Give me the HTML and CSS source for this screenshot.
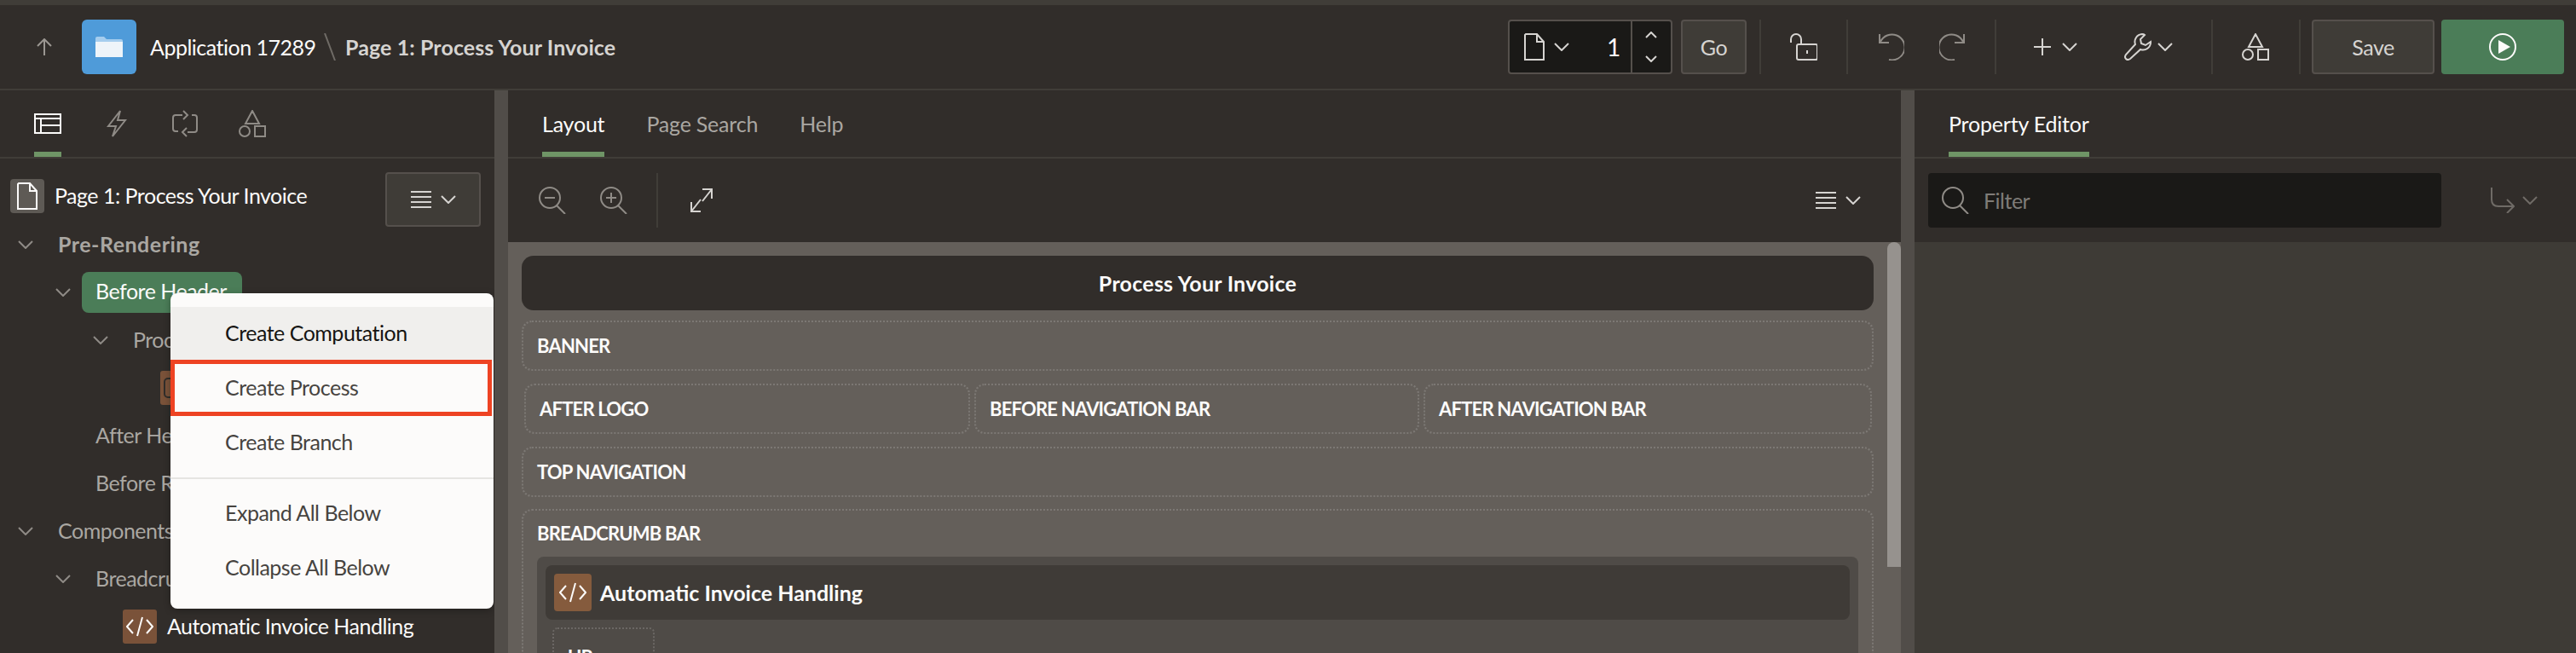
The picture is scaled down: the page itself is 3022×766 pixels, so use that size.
FILE: index.html
```html
<!DOCTYPE html>
<html>
<head>
    <title>Page Designer</title>
    <link rel="stylesheet" href="styles.css">
</head>
<body>
    <div class="top-strip"></div>

    <!-- Header toolbar -->
    <header class="toolbar">
        <svg class="ico up-arrow" width="18" height="20" viewBox="0 0 18 20"><path d="M9 20V1M1 9l8-8 8 8"/></svg>
        <div class="app-tile">
            <svg width="32" height="24" viewBox="0 0 32 24"><path d="M0 2q0-2 2-2h8l3 3h17q2 0 2 2v2H0z" fill="#a5cdee"/><path d="M0 6h32v18H0z" fill="#eef4f9"/></svg>
        </div>
        <span class="app-name">Application 17289</span>
        <svg class="crumb-sep" width="14" height="32" viewBox="0 0 14 32"><path d="M1 0l12 32"/></svg>
        <span class="page-name">Page 1: Process Your Invoice</span>

        <div class="page-box">
            <svg class="ico doc" width="24" height="32" viewBox="0 0 24 32"><path d="M2 1h13l8 9v21H1V2zM15 1v9h8"/></svg>
            <svg class="ico chev" width="18" height="10" viewBox="0 0 18 10"><path d="M1 1l8 8 8-8"/></svg>
            <span class="page-num">1</span>
            <div class="spin">
                <svg class="ico" width="14" height="8" viewBox="0 0 14 8"><path d="M1 7l6-6 6 6"/></svg>
                <svg class="ico" width="14" height="8" viewBox="0 0 14 8"><path d="M1 1l6 6 6-6"/></svg>
            </div>
        </div>
        <button class="btn go">Go</button>
        <i class="vsep sep-a"></i>
        <svg class="ico lock" width="32" height="32" viewBox="0 0 32 32"><path d="M1 11V7a6 6 0 0 1 12 0v6M10 13h20q2 0 2 2v14q0 2-2 2H10q-2 0-2-2V15q0-2 2-2zM20 20v4"/></svg>
        <i class="vsep sep-b"></i>
        <svg class="ico dim undo" width="30" height="32" viewBox="0 0 30 32"><path d="M1 1v10h11M2 10a15 15 0 1 1 10 21"/></svg>
        <svg class="ico dim redo" width="30" height="32" viewBox="0 0 30 32"><path d="M29 1v10H18M28 10a15 15 0 1 0-10 21"/></svg>
        <i class="vsep sep-c"></i>
        <svg class="ico plus" width="20" height="20" viewBox="0 0 20 20"><path d="M10 0v20M0 10h20"/></svg>
        <svg class="ico chev plus-chev" width="18" height="10" viewBox="0 0 18 10"><path d="M1 1l8 8 8-8"/></svg>
        <svg class="ico wrench" width="32" height="32" viewBox="0 0 32 32"><path d="M21 1a9 9 0 0 0-8 12L2 25q-2 3 0 5t5 0l12-11a9 9 0 0 0 12-9l-6 4-5-2-1-5 5-5q-1-1-3-1z"/></svg>
        <svg class="ico chev wrench-chev" width="18" height="10" viewBox="0 0 18 10"><path d="M1 1l8 8 8-8"/></svg>
        <i class="vsep sep-d"></i>
        <svg class="ico shapes-top" width="32" height="32" viewBox="0 0 32 32"><path d="M16 1l8 15H8zM1 25a6 6 0 1 0 12 0a6 6 0 1 0-12 0M19 19h12v12H19z"/></svg>
        <i class="vsep sep-e"></i>
        <button class="btn save">Save</button>
        <button class="run">
            <svg width="32" height="32" viewBox="0 0 32 32"><circle cx="16" cy="16" r="15" fill="none" stroke="#fcfbfa" stroke-width="2"/><path d="M11 8l14 8-14 8z" fill="#fcfbfa"/></svg>
        </button>
    </header>

    <div class="workspace">
        <!-- Left pane: rendering tree -->
        <aside class="side">
            <div class="tabs side-tabs">
                <div class="tab active">
                    <svg class="ico bright" width="32" height="24" viewBox="0 0 32 24"><path d="M1 1h30v22H1zM1 6h30M8 6v17M8 14h23"/></svg>
                </div>
                <div class="tab">
                    <svg class="ico dim" width="24" height="32" viewBox="0 0 24 32"><path d="M16 1L2 19h9l-4 12 15-19h-9z"/></svg>
                </div>
                <div class="tab">
                    <svg class="ico dim" width="32" height="32" viewBox="0 0 32 32"><path d="M13 6H5q-3 0-3 3v13q0 3 3 3h3M19 26h8q3 0 3-3V9q0-3-3-3h-3M14 1l5 5-5 5M18 21l-5 5 5 5"/></svg>
                </div>
                <div class="tab">
                    <svg class="ico dim" width="32" height="32" viewBox="0 0 32 32"><path d="M16 1l8 15H8zM1 25a6 6 0 1 0 12 0a6 6 0 1 0-12 0M19 19h12v12H19z"/></svg>
                </div>
            </div>
            <div class="tree-head">
                <div class="doc-tile">
                    <svg class="ico bright" width="24" height="32" viewBox="0 0 24 32"><path d="M2 1h13l8 9v21H1V2zM15 1v9h8"/></svg>
                </div>
                <span class="tree-title">Page 1: Process Your Invoice</span>
                <button class="btn menu-btn">
                    <svg class="ico" width="24" height="20" viewBox="0 0 24 20"><path d="M0 1h24M0 7h24M0 13h24M0 19h24"/></svg>
                    <svg class="ico chev" width="18" height="10" viewBox="0 0 18 10"><path d="M1 1l8 8 8-8"/></svg>
                </button>
            </div>
            <div class="tree">
                <div class="row lvl-1"><svg class="ico twist" width="18" height="10" viewBox="0 0 18 10"><path d="M1 1l8 8 8-8"/></svg><span class="strong">Pre-Rendering</span></div>
                <div class="row lvl-2"><svg class="ico twist" width="18" height="10" viewBox="0 0 18 10"><path d="M1 1l8 8 8-8"/></svg><span class="pill">Before Header</span></div>
                <div class="row lvl-3"><svg class="ico twist" width="18" height="10" viewBox="0 0 18 10"><path d="M1 1l8 8 8-8"/></svg><span>Processes</span></div>
                <div class="row lvl-4">
                    <div class="tile">
                        <svg width="40" height="40" viewBox="0 0 40 40"><rect x="5" y="9" width="30" height="22" rx="4" fill="none" stroke="#312d2a" stroke-width="2"/></svg>
                    </div>
                </div>
                <div class="row lvl-2b"><span>After Header</span></div>
                <div class="row lvl-2b"><span>Before Regions</span></div>
                <div class="row lvl-1"><svg class="ico twist" width="18" height="10" viewBox="0 0 18 10"><path d="M1 1l8 8 8-8"/></svg><span>Components</span></div>
                <div class="row lvl-2"><svg class="ico twist" width="18" height="10" viewBox="0 0 18 10"><path d="M1 1l8 8 8-8"/></svg><span class="plain">Breadcrumb Bar</span></div>
                <div class="row lvl-5">
                    <div class="tile">
                        <svg class="code" width="32" height="24" viewBox="0 0 32 24"><path d="M8 4L1 12l7 8M24 4l7 8-7 8M19 1l-6 22"/></svg>
                    </div>
                    <span class="bright-text">Automatic Invoice Handling</span>
                </div>
            </div>

            <!-- Context menu -->
            <div class="ctx-menu">
                <div class="ctx-item hover">Create Computation</div>
                <div class="ctx-item">Create Process</div>
                <div class="ctx-item">Create Branch</div>
                <div class="ctx-line"></div>
                <div class="ctx-item">Expand All Below</div>
                <div class="ctx-item">Collapse All Below</div>
                <div class="callout"></div>
            </div>
        </aside>

        <div class="splitter"></div>

        <!-- Center pane: layout -->
        <main class="center">
            <div class="tabs center-tabs">
                <div class="tab active">Layout</div>
                <div class="tab">Page Search</div>
                <div class="tab">Help</div>
            </div>
            <div class="layout-bar">
                <svg class="ico dim" width="32" height="32" viewBox="0 0 32 32"><path d="M1 13a12 12 0 1 0 24 0a12 12 0 1 0-24 0M21 22l10 10M7 13h12"/></svg>
                <svg class="ico dim zoom-in" width="32" height="32" viewBox="0 0 32 32"><path d="M1 13a12 12 0 1 0 24 0a12 12 0 1 0-24 0M21 22l10 10M7 13h12M13 7v12"/></svg>
                <i class="bar-sep"></i>
                <svg class="ico expand" width="26" height="28" viewBox="0 0 26 28"><path d="M14 1h11v11M25 1L14 15M1 16v11h11M1 27l11-14"/></svg>
                <div class="bar-menu">
                    <svg class="ico" width="24" height="20" viewBox="0 0 24 20"><path d="M0 1h24M0 7h24M0 13h24M0 19h24"/></svg>
                    <svg class="ico chev" width="18" height="10" viewBox="0 0 18 10"><path d="M1 1l8 8 8-8"/></svg>
                </div>
            </div>
            <div class="canvas">
                <div class="canvas-inner">
                    <div class="page-title">Process Your Invoice</div>
                    <div class="region">BANNER</div>
                    <div class="region-row">
                        <div class="region">AFTER LOGO</div>
                        <div class="region">BEFORE NAVIGATION BAR</div>
                        <div class="region">AFTER NAVIGATION BAR</div>
                    </div>
                    <div class="region">TOP NAVIGATION</div>
                    <div class="region tall">
                        <div class="region-label">BREADCRUMB BAR</div>
                        <div class="crumb-wrap">
                            <div class="crumb-head">
                                <div class="tile big">
                                    <svg class="code" width="32" height="24" viewBox="0 0 32 24"><path d="M8 4L1 12l7 8M24 4l7 8-7 8M19 1l-6 22"/></svg>
                                </div>
                                <span>Automatic Invoice Handling</span>
                            </div>
                            <div class="slot">UP</div>
                        </div>
                    </div>
                </div>
                <div class="scroll"><div class="thumb"></div></div>
            </div>
        </main>

        <div class="splitter"></div>

        <!-- Right pane: property editor -->
        <section class="props">
            <div class="tabs props-tabs">
                <div class="tab active">Property Editor</div>
            </div>
            <div class="props-bar">
                <div class="filter">
                    <svg class="ico dim" width="32" height="32" viewBox="0 0 32 32"><path d="M1 13a12 12 0 1 0 24 0a12 12 0 1 0-24 0M21 22l10 10"/></svg>
                    <span>Filter</span>
                </div>
                <svg class="ico faint go-to" width="28" height="30" viewBox="0 0 28 30"><path d="M1 0v14q0 8 8 8h18M19 14l8 8-8 8"/></svg>
                <svg class="ico faint chev" width="18" height="10" viewBox="0 0 18 10"><path d="M1 1l8 8 8-8"/></svg>
            </div>
            <div class="props-body"></div>
        </section>
    </div>
</body>
</html>
```

FILE: styles.css
```css
* {
    box-sizing: border-box;
}
html, body {
    margin: 0;
    height: 766px;
    overflow: hidden;
}
body {
    background: #312d2a;
    color: #d6d4d1;
    font-family: "Lato", "Noto Sans", sans-serif;
    font-size: 25px;
    letter-spacing: -0.5px;
    display: flex;
    flex-direction: column;
}
button {
    font: inherit;
    letter-spacing: inherit;
    cursor: pointer;
}
.ico {
    fill: none;
    stroke: #d6d4d1;
    stroke-width: 2;
    flex: none;
    display: block;
}
.ico.dim {
    stroke: #8f8b86;
}
.ico.faint {
    stroke: #6f6b66;
}
.ico.bright {
    stroke: #fcfbfa;
}

.top-strip {
    height: 6px;
    background: #403d38;
}

/* Header */
.toolbar {
    height: 100px;
    flex: none;
    border-bottom: 2px solid #403d38;
    display: flex;
    align-items: center;
    padding-left: 43px;
}
.up-arrow {
    stroke: #9b9792;
}
.app-tile {
    width: 64px;
    height: 64px;
    margin-left: 35px;
    background: #4f9bd9;
    border-radius: 6px;
    display: flex;
    align-items: center;
    justify-content: center;
}
.app-name {
    margin-left: 16px;
    color: #fcfbfa;
    width: 190px;
    white-space: nowrap;
}
.crumb-sep {
    margin-left: 14px;
    fill: none;
    stroke: #6f6b66;
    stroke-width: 2;
}
.page-name {
    margin-left: 11px;
    font-weight: 700;
    letter-spacing: 0.1px;
    color: #d6d4d1;
    width: 317px;
    white-space: nowrap;
}
.page-box {
    margin-left: 1047px;
    width: 193px;
    height: 64px;
    background: #1a1917;
    border: 2px solid #55504c;
    border-radius: 4px;
    display: flex;
    align-items: center;
    padding-left: 17px;
}
.page-box .chev {
    margin-left: 11px;
}
.page-num {
    margin-left: 44px;
    color: #fcfbfa;
    width: 28px;
    font-size: 28px;
}
.spin {
    height: 100%;
    width: 48px;
    border-left: 2px solid #55504c;
    display: flex;
    flex-direction: column;
    align-items: center;
    justify-content: center;
    gap: 20px;
}
.btn {
    height: 64px;
    background: #3f3c37;
    border: 2px solid #55504c;
    border-radius: 4px;
    color: #d6d4d1;
}
.go {
    width: 77px;
    margin-left: 10px;
}
.vsep {
    width: 2px;
    height: 64px;
    background: #403d38;
    flex: none;
}
.sep-a {
    margin-left: 15px;
}
.lock {
    margin-left: 34px;
}
.sep-b {
    margin-left: 34px;
}
.undo {
    margin-left: 36px;
}
.redo {
    margin-left: 41px;
}
.sep-c {
    margin-left: 35px;
}
.plus {
    margin-left: 44px;
}
.plus-chev {
    margin-left: 13px;
}
.wrench {
    margin-left: 55px;
}
.wrench-chev {
    margin-left: 7px;
}
.sep-d {
    margin-left: 45px;
}
.shapes-top {
    margin-left: 34px;
}
.sep-e {
    margin-left: 35px;
}
.save {
    width: 144px;
    margin-left: 13px;
}
.run {
    width: 144px;
    height: 64px;
    margin-left: 8px;
    background: #4b7d58;
    border: 0;
    border-radius: 4px;
    display: flex;
    align-items: center;
    justify-content: center;
}

/* Panes */
.workspace {
    flex: 1;
    display: flex;
    min-height: 0;
}
.side {
    width: 580px;
    flex: none;
    position: relative;
    overflow: hidden;
}
.splitter {
    width: 16px;
    flex: none;
    background: #514d49;
}
.center {
    width: 1634px;
    flex: none;
    display: flex;
    flex-direction: column;
}
.props {
    flex: 1;
    display: flex;
    flex-direction: column;
}

/* Tabs */
.tabs {
    height: 80px;
    flex: none;
    border-bottom: 2px solid #403d38;
    display: flex;
    letter-spacing: -0.2px;
}
.tab {
    height: 78px;
    display: flex;
    align-items: center;
    color: #aaa7a2;
    border-bottom: 6px solid transparent;
    padding-top: 6px;
}
.tab.active {
    color: #fcfbfa;
    border-bottom-color: #6f9566;
}
.side-tabs {
    padding-left: 40px;
}
.side-tabs .tab:nth-child(2) {
    margin-left: 53px;
}
.side-tabs .tab:nth-child(3) {
    margin-left: 52px;
}
.side-tabs .tab:nth-child(4) {
    margin-left: 47px;
}
.center-tabs {
    padding-left: 40px;
    gap: 49px;
}
.props-tabs {
    padding-left: 40px;
}

/* Tree */
.tree-head {
    height: 73px;
    flex: none;
    display: flex;
    align-items: flex-start;
    padding: 16px 0 0 12px;
}
.doc-tile {
    width: 40px;
    height: 40px;
    margin-top: 8px;
    background: #5e5a55;
    border-radius: 4px;
    display: flex;
    align-items: center;
    justify-content: center;
}
.tree-title {
    margin: 7px 0 0 12px;
    width: 388px;
    line-height: 40px;
    color: #fcfbfa;
}
.menu-btn {
    width: 112px;
    display: flex;
    align-items: center;
    justify-content: center;
    gap: 11px;
    position: relative;
    z-index: 1;
}
.row {
    height: 56px;
    display: flex;
    align-items: center;
    color: #aaa7a2;
    white-space: nowrap;
}
.row > span {
    margin-bottom: 3px;
}
.twist {
    stroke: #8f8b86;
}
.lvl-1 {
    padding-left: 21px;
}
.lvl-1 span {
    margin-left: 29px;
}
.lvl-2 {
    padding-left: 65px;
}
.lvl-2 span {
    margin-left: 29px;
}
.lvl-2 .pill {
    margin: 0 0 0 13px;
}
.lvl-3 {
    padding-left: 109px;
}
.lvl-3 span {
    margin-left: 29px;
}
.lvl-4 {
    padding-left: 188px;
}
.lvl-2b {
    padding-left: 112px;
}
.lvl-5 {
    padding-left: 144px;
}
.lvl-5 span {
    margin-left: 12px;
}
.strong {
    font-weight: 700;
    letter-spacing: 0.5px;
}
.bright-text {
    color: #fcfbfa;
}
.pill {
    height: 48px;
    width: 188px;
    padding-left: 16px;
    line-height: 44px;
    background: #4b7d58;
    border-radius: 8px;
    color: #fcfbfa;
}
.tile {
    width: 40px;
    height: 40px;
    background: #7a5239;
    border-radius: 3px;
    display: flex;
    align-items: center;
    justify-content: center;
    flex: none;
}
.tile.big {
    width: 44px;
    height: 44px;
    background: #855b3d;
    border-radius: 4px;
}
.code {
    fill: none;
    stroke: #fcfbfa;
    stroke-width: 2;
}

/* Context menu */
.ctx-menu {
    position: absolute;
    top: 238px;
    left: 200px;
    width: 379px;
    height: 370px;
    padding: 16px 0;
    background: #fcfbfa;
    border-radius: 8px;
    box-shadow: 0 2px 8px rgba(0, 0, 0, 0.3);
    color: #46433f;
    z-index: 2;
}
.ctx-item {
    height: 64px;
    line-height: 61px;
    padding-left: 64px;
}
.ctx-item.hover {
    background: #f0efed;
    color: #161513;
}
.ctx-line {
    height: 2px;
    background: #e5e4e2;
    margin: 8px 0 9px;
}
.callout {
    position: absolute;
    top: 78px;
    left: 0;
    width: 377px;
    height: 66px;
    border: 5px solid #ee4323;
}

/* Layout bar */
.layout-bar {
    height: 98px;
    flex: none;
    display: flex;
    align-items: center;
    padding: 0 47px 0 36px;
}
.zoom-in {
    margin-left: 40px;
}
.bar-sep {
    width: 2px;
    height: 64px;
    background: #403d38;
    margin-left: 34px;
}
.expand {
    margin-left: 38px;
}
.bar-menu {
    margin-left: auto;
    display: flex;
    align-items: center;
    gap: 11px;
}

/* Canvas */
.canvas {
    flex: 1;
    min-height: 0;
    display: flex;
    background: #645f5a;
    overflow: hidden;
}
.canvas-inner {
    flex: 1;
    padding: 16px 16px 0;
    display: flex;
    flex-direction: column;
    gap: 15px;
    min-width: 0;
}
.page-title {
    height: 64px;
    margin-bottom: -3px;
    flex: none;
    background: #312d2a;
    border-radius: 14px;
    color: #fcfbfa;
    font-weight: 700;
    letter-spacing: 0.25px;
    display: flex;
    align-items: center;
    justify-content: center;
}
.region {
    height: 59px;
    flex: none;
    border: 2px dotted rgba(255, 255, 255, 0.16);
    border-radius: 12px;
    padding-left: 16px;
    display: flex;
    align-items: center;
    color: #fcfbfa;
    font-size: 22px;
    font-weight: 700;
    letter-spacing: -0.8px;
}
.region-row {
    display: grid;
    grid-template-columns: 523px 522px 1fr;
    gap: 5px;
    padding: 0 2px 0 3px;
    flex: none;
}
.region.tall {
    height: 300px;
    margin-top: -1px;
    display: block;
    padding: 0 16px;
}
.region-label {
    line-height: 54px;
}
.crumb-wrap {
    background: #4f4b47;
    border-radius: 8px;
    padding: 10px 10px;
}
.crumb-head {
    height: 64px;
    background: #3f3b37;
    border-radius: 8px;
    padding-left: 10px;
    display: flex;
    align-items: center;
    gap: 10px;
    font-size: 25px;
    letter-spacing: 0;
}
.slot {
    width: 120px;
    height: 70px;
    margin: 9px 0 0 8px;
    border: 2px dotted rgba(255, 255, 255, 0.16);
    border-radius: 6px;
    padding: 19px 0 0 16px;
    font-size: 22px;
}
.scroll {
    width: 16px;
    flex: none;
}
.thumb {
    height: 381px;
    background: #96928e;
    border-radius: 8px 8px 0 0;
}

/* Property editor */
.props-bar {
    height: 98px;
    flex: none;
    display: flex;
    align-items: center;
    padding-left: 16px;
}
.filter {
    width: 602px;
    height: 64px;
    background: #1a1917;
    border-radius: 4px;
    display: flex;
    align-items: center;
    padding-left: 16px;
    gap: 17px;
    color: #7f7c78;
    line-height: 58px;
    flex: none;
}
.go-to {
    margin-left: 58px;
}
.props-bar .chev {
    margin-left: 9px;
}
.props-body {
    flex: 1;
    background: #3e3b36;
}
```
